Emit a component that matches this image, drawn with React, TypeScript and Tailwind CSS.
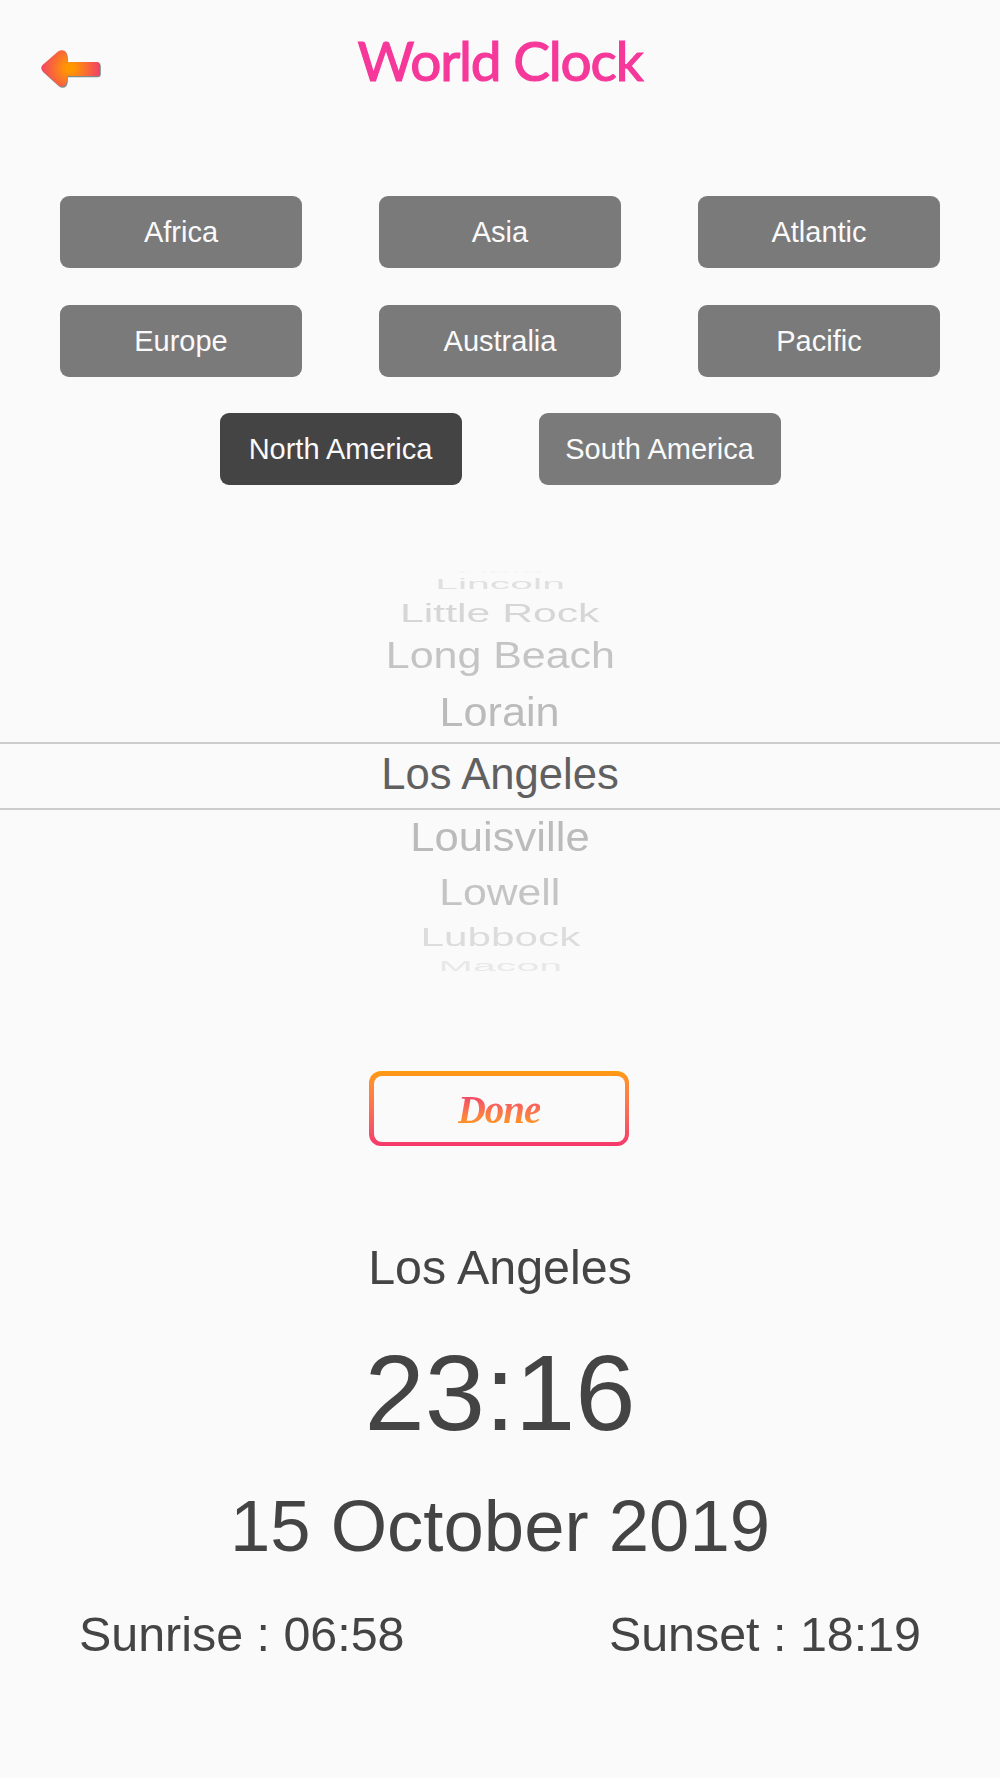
const regions = [
  ["Africa", "Asia", "Atlantic"],
  ["Europe", "Australia", "Pacific"],
  ["North America", "South America"],
];

const arrowPath =
  "M2.5 16 L18 2.5 Q22 0 25.5 2.5 Q27.5 5 27 13 L57 13 Q60 13 60 16 L60 24 Q60 27 57 27 L27 27 Q27.5 33 25.5 36 Q22 39 18 36 L2.5 22 Q0 19 2.5 16 Z";

function Arrow() {
  return (
    <svg width="62" height="40" viewBox="0 0 62 40" className="overflow-visible">
      <defs>
        <radialGradient id="arrowFill" gradientUnits="userSpaceOnUse" cx="30" cy="19" r="31">
          <stop offset="0.12" stopColor="#ff9800" />
          <stop offset="1" stopColor="#f23d6b" />
        </radialGradient>
      </defs>
      <path d={arrowPath} fill="#7f8c8c" transform="translate(0.8 1.2)" />
      <path d={arrowPath} fill="url(#arrowFill)" />
    </svg>
  );
}

function RegionButton({ label }: { label: string }) {
  const active = label === "North America";
  return (
    <button
      className={`w-[242px] h-[72px] pt-[2px] rounded-[9px] text-[29px] text-[#fafafa] ${active ? "bg-[#444444]" : "bg-[#7a7a7a]"}`}
    >
      {label}
    </button>
  );
}

export default function App() {
  return (
    <div className="w-[1000px] h-[1778px] bg-[#fafafa] overflow-hidden font-['Liberation_Sans',Arial,sans-serif] text-[#444444]">
      <header className="relative h-[196px]">
        <div className="absolute left-[40px] top-[49px]">
          <Arrow />
        </div>
        <h1 className="pt-[28px] text-center text-[55px] leading-[64px] tracking-[-1.2px] [-webkit-text-stroke:1.2px_#f5389a] font-['Lato',sans-serif] text-[#f5389a]">
          World Clock
        </h1>
      </header>

      <div className="flex flex-col gap-[36.5px]">
        {regions.map((row) => (
          <div key={row[0]} className="flex justify-center gap-[77px]">
            {row.map((r) => (
              <RegionButton key={r} label={r} />
            ))}
          </div>
        ))}
      </div>

      {/* picker wheel, rows squashed towards the edges */}
      <div className="mt-[86px] h-[408px] flex flex-col items-center text-[43.6px] leading-none overflow-hidden">
        <div className="shrink-0 h-[2px] flex items-center text-[#f4f4f4] [transform:scale(0.92,0.08)]">Lima</div>
        <div className="shrink-0 h-[21px] flex items-center text-[#e0e0e0] [transform:scale(0.94,0.345)]">Lincoln</div>
        <div className="shrink-0 h-[38px] flex items-center text-[#d6d6d6] [transform:scale(0.98,0.61)]">Little Rock</div>
        <div className="shrink-0 h-[48px] flex items-center text-[#c4c4c4] [transform:scale(0.985,0.84)]">Long Beach</div>
        <div className="shrink-0 h-[59px] mt-[3px] flex items-center text-[#bbbbbb] [transform:scale(0.99,0.95)]">Lorain</div>
        <div className="shrink-0 w-full h-[68px] pb-[2px] border-y-2 border-[#cccccc] flex items-center justify-center text-[#606060]">
          Los Angeles
        </div>
        <div className="shrink-0 h-[55px] flex items-center text-[#bbbbbb] [transform:scale(1,0.94)]">Louisville</div>
        <div className="shrink-0 h-[56px] flex items-center text-[#c4c4c4] [transform:scale(0.98,0.84)]">Lowell</div>
        <div className="shrink-0 h-[32px] flex items-center text-[#dcdcdc] [transform:scale(0.97,0.61)]">Lubbock</div>
        <div className="shrink-0 h-[26px] flex items-center text-[#e8e8e8] [transform:scale(0.945,0.345)]">Macon</div>
      </div>

      <div className="mt-[92px] pr-[2px] flex justify-center">
        <button className="w-[260px] h-[75px] rounded-[12px] p-[4.5px] bg-gradient-to-b from-[#ff9a0a] to-[#f5366b]">
          <span className="w-full h-full pt-[3px] rounded-[8px] bg-[#fafafa] flex items-center justify-center">
            <span className="font-['Liberation_Serif',serif] font-bold italic text-[39px] leading-[32px] tracking-[-1px] bg-gradient-to-b from-[#f23d6b] to-[#ff9800] bg-clip-text text-transparent">
              Done
            </span>
          </span>
        </button>
      </div>

      <div className="mt-[93px] text-center text-[48.4px] leading-[56px]">Los Angeles</div>
      <div className="mt-[37px] text-center text-[108.4px] leading-[122px]">23:16</div>
      <div className="mt-[30px] text-center text-[72.5px] leading-[84px]">15 October 2019</div>
      <div className="mt-[38px] px-[79px] flex justify-between text-[48.4px] leading-[56px]">
        <span>Sunrise : 06:58</span>
        <span>Sunset : 18:19</span>
      </div>
    </div>
  );
}
